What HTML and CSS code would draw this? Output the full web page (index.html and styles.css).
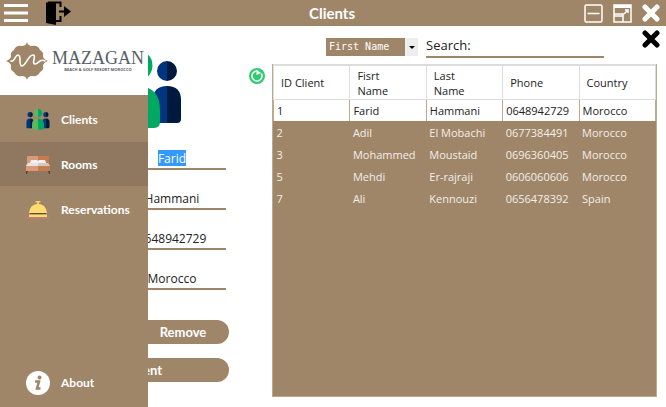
FILE: index.html
```html
<!DOCTYPE html>
<html lang="en">
<head>
<meta charset="utf-8">
<title>Clients</title>
<link rel="stylesheet" href="styles.css">
</head>
<body>
<svg class="defs" aria-hidden="true">
  <symbol id="people" viewBox="0 0 90 80">
    <path fill="#003580" d="M1 70V50Q1 36 15 36V73H4Q1 73 1 70Z"/>
    <path fill="#001a3f" d="M15 36Q29 36 29 50V73H15Z"/>
    <path fill="#003580" d="M61 50Q61 36 75 36V73H61Z"/>
    <path fill="#001a3f" d="M75 36Q89 36 89 50V69Q89 73 85 73H75Z"/>
    <path fill="#003580" d="M15 11a10 10 0 0 0 0 20zM75 11a10 10 0 0 0 0 20z"/>
    <path fill="#001a3f" d="M15 11a10 10 0 0 1 0 20zM75 11a10 10 0 0 1 0 20z"/>
    <path fill="#5cb85c" d="M45 0a15 15 0 0 0 0 31zM22 73V60Q22 36 45 36V78H28Q22 78 22 73Z"/>
    <path fill="#00a862" d="M45 0a15 15 0 0 1 0 31zM45 36Q68 36 68 60V72Q68 78 61 78H45Z"/>
  </symbol>
</svg>

<header class="titlebar">
  <div class="group">
    <button class="icon-btn" aria-label="Menu">
      <svg width="24" height="20" viewBox="0 0 24 20"><path stroke="#fff" stroke-width="3" d="M0 2.500H24M0 10H24M0 17.500H24"/></svg>
    </button>
    <button class="icon-btn" aria-label="Log out">
      <svg width="25" height="24" viewBox="0 0 25 24">
        <path d="M0 1.500L10 1V24L0 22Z"/>
        <path fill="none" stroke="#000" stroke-width="2" d="M2 1.500H14.500V6M14.500 15V20H9"/>
        <path fill="none" stroke="#000" stroke-width="2" d="M13 10.500H19"/>
        <path d="M18 5L25 10.500L18 16Z"/>
      </svg>
    </button>
  </div>
  <h1>Clients</h1>
  <div class="group end">
    <button class="icon-btn" aria-label="Minimize">
      <svg width="19" height="19" viewBox="0 0 19 19" fill="none" stroke="#fff"><rect x="1" y="1" width="17" height="17" rx="1.500" stroke-width="1.500"/><path stroke-width="1.500" d="M3.500 9.500H15.500"/></svg>
    </button>
    <button class="icon-btn" aria-label="Restore">
      <svg width="19" height="19" viewBox="0 0 19 19" fill="none" stroke="#fff"><rect x="1" y="1" width="17" height="17" stroke-width="1.500"/><path stroke-width="3" d="M1 2.500H18"/><path stroke-width="1.500" d="M1 10H10V18M1 12H10M11 10L15 6M12 6H15V9"/></svg>
    </button>
    <button class="icon-btn" aria-label="Close window">
      <svg width="18" height="18" viewBox="0 0 18 18"><path stroke="#fff" stroke-width="5" stroke-linecap="round" d="M3 3L15 15M15 3L3 15"/></svg>
    </button>
  </div>
</header>

<main>
  <form class="editor">
    <svg class="people" width="90" height="80" aria-hidden="true"><use href="#people"/></svg>
    <div class="field"><input class="selected" aria-label="First name" value="Farid"></div>
    <div class="field"><input aria-label="Last name" value="Hammani"></div>
    <div class="field"><input aria-label="Phone" value="0648942729"></div>
    <div class="field"><input aria-label="Country" value="Morocco"></div>
    <div class="actions">
      <button type="button">Update</button>
      <button type="button">Remove</button>
      <button type="button" class="wide">New Client</button>
    </div>
  </form>

  <section class="records">
    <div class="toolbar">
      <span class="picker">
        <select aria-label="Search by"><option>First Name</option></select>
      </span>
      <div class="search"><label for="q">Search:</label><input id="q"></div>
      <button class="icon-btn" aria-label="Close">
        <svg width="18" height="18" viewBox="0 0 18 18"><path stroke="#000" stroke-width="5" stroke-linecap="round" d="M3 3L15 15M15 3L3 15"/></svg>
      </button>
    </div>
    <div class="list">
      <button class="icon-btn" aria-label="Refresh">
        <svg width="16" height="16" viewBox="0 0 16 16"><circle cx="8" cy="8" r="8" fill="#2ecc71"/><path fill="none" stroke="#fff" stroke-width="1.600" d="M8 3A5 5 0 1 0 12.300 5.500"/><path fill="#fff" d="M7.500 1.500V7L12 5Z"/></svg>
      </button>
      <div class="panel">
        <table>
          <thead><tr><th>ID Client</th><th>Fisrt<br>Name</th><th>Last<br>Name</th><th>Phone</th><th>Country</th></tr></thead>
          <tbody>
            <tr class="current"><td>1</td><td>Farid</td><td>Hammani</td><td>0648942729</td><td>Morocco</td></tr>
            <tr><td>2</td><td>Adil</td><td>El Mobachi</td><td>0677384491</td><td>Morocco</td></tr>
            <tr><td>3</td><td>Mohammed</td><td>Moustaid</td><td>0696360405</td><td>Morocco</td></tr>
            <tr><td>5</td><td>Mehdi</td><td>Er-rajraji</td><td>0606060606</td><td>Morocco</td></tr>
            <tr><td>7</td><td>Ali</td><td>Kennouzi</td><td>0656478392</td><td>Spain</td></tr>
          </tbody>
        </table>
      </div>
    </div>
  </section>

  <aside class="drawer">
    <div class="brand">
      <svg width="42" height="38" viewBox="0 0 42 38" aria-hidden="true">
        <path fill="#9f8669" d="M21 0Q22 4 26 4Q32 3 34 8Q38 10 37 14Q37 17 42 19Q37 21 37 24Q38 28 34 30Q32 35 26 34Q22 34 21 38Q20 34 16 34Q10 35 8 30Q4 28 5 24Q5 21 0 19Q5 17 5 14Q4 10 8 8Q10 3 16 4Q20 4 21 0Z"/>
        <path fill="none" stroke="#fff" stroke-width="1.600" stroke-linecap="round" d="M5 19C9 20 9 13 12 13C16 13 12 24 16 24C20 24 22 13 27 13C31 13 25 22 29 22C33 22 33 16 39 19"/>
      </svg>
      <div class="brand-text"><strong>MAZAGAN</strong><small>BEACH &amp; GOLF RESORT MOROCCO</small></div>
    </div>
    <nav>
      <a href="#clients"><svg width="24" height="21" aria-hidden="true"><use href="#people"/></svg><span>Clients</span></a>
      <a href="#rooms" class="active">
        <svg width="24" height="20" viewBox="0 0 24 20" aria-hidden="true">
          <path fill="#d99a78" d="M1 2Q1 1 2 1H12V16H0V10L1 9Z"/><path fill="#c77c4e" d="M12 1H22Q23 1 23 2V9L24 10V16H12Z"/>
          <path fill="#f4f2f0" d="M5 5H11L12 6L13 5H19L20 8H4Z"/><path fill="#e8e4e2" d="M2 8H12V11H0Z"/><path fill="#cfc9c7" d="M12 8H22L24 11H12Z"/>
          <path fill="#5d4037" d="M0 16H2L1 19H0ZM22 16H24V19H23Z"/>
        </svg><span>Rooms</span></a>
      <a href="#reservations">
        <svg width="24" height="20" viewBox="0 0 24 20" aria-hidden="true">
          <path fill="#f5cf62" d="M9.500 1H14.500V2.500H13V5H11V2.500H9.500Z"/><path fill="#ffdc70" d="M3 13Q4 4 12 4Q20 4 21 13Z"/>
          <path fill="#5d4f43" d="M4 13H20V14.500H4Z"/><path fill="#ffdc70" d="M3 14.500H21V17H3Z"/><path fill="#b98272" d="M1 17H23V19H1Z"/>
        </svg><span>Reservations</span></a>
      <a href="#about" class="about">
        <svg width="24" height="24" viewBox="0 0 24 24" aria-hidden="true"><circle cx="12" cy="12" r="12" fill="#fff"/><circle cx="13.500" cy="6.500" r="2" fill="#9f8669"/><path fill="none" stroke="#9f8669" stroke-width="2.500" d="M9 10.500H13L11 17.500H14.500"/></svg><span>About</span></a>
    </nav>
  </aside>
</main>
</body>
</html>
```
FILE: styles.css
```css
* { box-sizing: border-box; }
:root { --brown: #9f8669; --dark: #8f785f; }
body {
  margin: 0;
  min-height: 100vh;
  display: flex;
  flex-direction: column;
  background: #fff;
  color: #222;
  font: 11px/15px "Open Sans", "Noto Sans", sans-serif;
}
button, input, select { font: inherit; color: inherit; border: 0; padding: 0; margin: 0; background: none; outline: 0; }
svg { display: block; flex: none; }
.defs { position: absolute; width: 0; height: 0; }

.titlebar {
  display: grid;
  grid-template-columns: 1fr auto 1fr;
  align-items: center;
  height: 26px;
  padding: 0 6px 0 4px;
  background: var(--brown);
  color: #fff;
}
.titlebar h1 { margin: 0; font: bold 15px/20px Lato, sans-serif; }
.group { display: flex; align-items: center; gap: 18px; }
.group.end { justify-content: flex-end; gap: 10px; }

main { flex: 1; position: relative; display: grid; grid-template-columns: 229px 1fr; }

.editor { display: flex; flex-direction: column; align-items: flex-end; gap: 18px; padding: 24px 0 24px 31px; }
.people { margin-right: 47px; }
.field {
  display: flex;
  justify-content: center;
  align-items: center;
  width: 108px;
  height: 22px;
  margin-right: 3px;
  border-bottom: 2px solid var(--brown);
  font-size: 12px;
}
.field input { width: 100%; height: 16px; text-align: center; }
.field .selected { width: auto; field-sizing: content; background: #3399ff; color: #fff; }
.actions {
  display: grid;
  grid-template-columns: 1fr 1fr;
  gap: 14px;
  width: 100%;
  margin-top: 12px;
}
.actions button { height: 24px; border-radius: 12px; background: var(--brown); color: #fff; font: bold 13px/20px Lato, sans-serif; }
.actions .wide { grid-column: 1 / -1; }

.records { display: flex; flex-direction: column; padding: 4px 9px 10px 20px; }
.toolbar { display: flex; justify-content: flex-end; height: 34px; margin-right: -3px; }
.picker { display: flex; align-items: center; width: 92px; height: 18px; margin: 8px 8px 0 0; background: #eee; }
.picker::after { content: ""; margin: auto; border: 3px solid transparent; border-top-color: #000; border-bottom: 0; }
.picker select {
  appearance: none;
  width: 79px;
  height: 18px;
  padding: 0 3px;
  background: var(--brown);
  color: #fff;
  font: 10px/18px "DejaVu Sans Mono", monospace;
}
.search {
  display: flex;
  width: 178px;
  height: 22px;
  margin: 6px 38px 0 0;
  border-bottom: 2px solid var(--brown);
  font-size: 13px;
  line-height: 18px;
}
.search input { flex: 1; min-width: 0; }
.toolbar .icon-btn { align-self: flex-start; }

.list { flex: 1; display: flex; align-items: flex-start; gap: 7px; }
.list .icon-btn { margin-top: 4px; }
.panel { flex: 1; align-self: stretch; background: var(--brown); border: 1px solid #bba990; border-top: 0; }
table { width: 100%; table-layout: fixed; border-collapse: collapse; }
th { height: 34px; padding: 1px 7px 0; text-align: left; font-weight: 400; background: #fff; border: solid #ddd; border-width: 2px 1px 1px; }
td { height: 22px; padding: 0 3px; color: #f3eee8; white-space: nowrap; }
.current td { background: #fff; color: #222; border: solid #bba990; border-width: 0 1px; }

.drawer {
  position: absolute;
  inset: 0 auto 0 0;
  width: 148px;
  display: flex;
  flex-direction: column;
  background: var(--brown);
}
.brand { display: flex; align-items: center; gap: 4px; height: 69px; padding-left: 6px; background: #fff; color: #555e66; }
.brand-text { display: flex; flex-direction: column; align-items: center; }
.brand strong { font: 18px/18px "Liberation Serif", serif; }
.brand small { font: bold 4px/6px "Open Sans", sans-serif; white-space: nowrap; }
nav { flex: 1; display: flex; flex-direction: column; }
nav a {
  display: flex;
  align-items: center;
  gap: 11px;
  height: 45px;
  padding: 2px 12px 0 26px;
  color: #fff;
  font: bold 12px/18px Lato, sans-serif;
  text-decoration: none;
}
nav a:first-child { height: 47px; }
nav .active { height: 44px; background: var(--dark); }
nav .about { margin-top: auto; height: 50px; }
```
